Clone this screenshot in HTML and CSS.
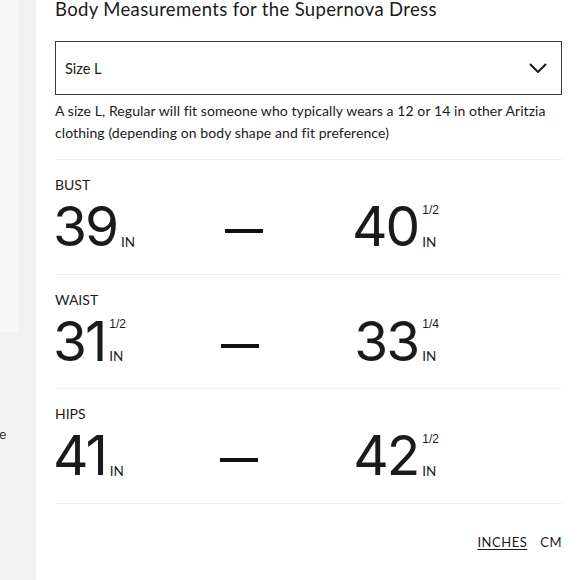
FILE: index.html
```html
<!DOCTYPE html>
<html lang="en">
<head>
<meta charset="utf-8">
<title>Body Measurements</title>
<link rel="stylesheet" href="styles.css">
</head>
<body>
<div class="page">
  <aside class="side">
    <div class="side-card"></div>
    <div class="side-text">e</div>
  </aside>
  <main class="panel">
    <h1 class="title">Body Measurements for the Supernova Dress</h1>
    <div class="select">
      <span class="select-value">Size L</span>
      <svg class="chevron" width="18" height="10" viewBox="0 0 18 10" aria-hidden="true">
        <path d="M1 1 L9 9 L17 1" fill="none" stroke="#1a1a1a" stroke-width="2"/>
      </svg>
    </div>
    <p class="note">A size L, Regular will fit someone who typically wears a 12 or 14 in other Aritzia clothing (depending on body shape and fit preference)</p>
    <div class="rows">
      <section class="row">
        <div class="label">BUST</div>
        <div class="range">
          <div class="val"><span class="num">39</span><span class="stack"><span class="frac"></span><span class="unit">IN</span></span></div>
          <span class="dash"></span>
          <div class="val"><span class="num">40</span><span class="stack"><span class="frac">1/2</span><span class="unit">IN</span></span></div>
        </div>
      </section>
      <section class="row">
        <div class="label">WAIST</div>
        <div class="range">
          <div class="val"><span class="num">31</span><span class="stack"><span class="frac">1/2</span><span class="unit">IN</span></span></div>
          <span class="dash"></span>
          <div class="val"><span class="num">33</span><span class="stack"><span class="frac">1/4</span><span class="unit">IN</span></span></div>
        </div>
      </section>
      <section class="row">
        <div class="label">HIPS</div>
        <div class="range">
          <div class="val"><span class="num">41</span><span class="stack"><span class="frac"></span><span class="unit">IN</span></span></div>
          <span class="dash"></span>
          <div class="val"><span class="num">42</span><span class="stack"><span class="frac">1/2</span><span class="unit">IN</span></span></div>
        </div>
      </section>
    </div>
    <div class="units">
      <span class="unit-opt active">INCHES</span>
      <span class="unit-opt">CM</span>
    </div>
  </main>
</div>
</body>
</html>
```

FILE: styles.css
```css
* { box-sizing: border-box; }
html, body { margin: 0; padding: 0; }
body {
  font-family: Lato, "Noto Sans", sans-serif;
  color: #1a1a1a;
  background: #f2f2f2;
}
.page {
  display: flex;
  min-height: 580px;
  width: 580px;
  overflow: hidden;
}
.side {
  width: 36px;
  flex: none;
  background: #f2f2f2;
  display: flex;
  flex-direction: column;
}
.side-card {
  width: 18px;
  height: 332px;
  background: #f8f8f8;
}
.side-text {
  margin-top: 94px;
  font-size: 14px;
  line-height: 16px;
  color: #333;
  margin-left: -1px;
}
.panel {
  flex: 1;
  background: #fff;
  padding: 0 18px 0 19px;
  min-height: 580px;
}
.title {
  margin: 0;
  padding-top: 1px;
  font-size: 18.5px;
  font-weight: 400;
  line-height: 17px;
  letter-spacing: 0.35px;
}
.select {
  margin-top: 23px;
  height: 54px;
  border: 1.5px solid #3a3a3a;
  display: flex;
  align-items: center;
  justify-content: space-between;
  padding: 0 14px 0 9px;
}
.select-value {
  font-size: 14.5px;
}
.chevron { display: block; }
.note {
  margin: 5px 0 0;
  font-size: 14px;
  line-height: 22px;
  letter-spacing: 0.08px;
  padding-bottom: 15px;
  border-bottom: 1px solid #eeeeee;
}
.rows {
  border-bottom: 1px solid #eeeeee;
}
.row {
  padding: 17px 0 19.5px;
}
.row + .row {
  border-top: 1px solid #eeeeee;
}
.label {
  font-size: 14px;
  line-height: 16px;
}
.range {
  margin: 6px 0 0 -2px;
  width: 386px;
  display: flex;
  justify-content: space-between;
  align-items: flex-start;
}
.val {
  display: flex;
  align-items: stretch;
}
.num {
  font-family: Inter, "Liberation Sans", Arial, sans-serif;
  font-size: 55px;
  line-height: 55px;
  letter-spacing: -2px;
}
.stack {
  display: flex;
  flex-direction: column;
  justify-content: space-between;
  padding: 4.5px 0 6.3px 4px;
}
.frac {
  font-family: "Liberation Sans", Arial, sans-serif;
  font-size: 12px;
  line-height: 12px;
  min-height: 12px;
}
.unit {
  font-size: 13.5px;
  line-height: 12px;
}
.dash {
  width: 38px;
  height: 4px;
  background: #111;
  margin-top: 30px;
}
.units {
  margin-top: 30.7px;
  display: flex;
  justify-content: flex-end;
  gap: 13px;
  font-size: 13px;
  line-height: 16px;
  letter-spacing: 0.5px;
}
.unit-opt.active {
  text-decoration: underline;
  text-underline-offset: 2px;
}
```
